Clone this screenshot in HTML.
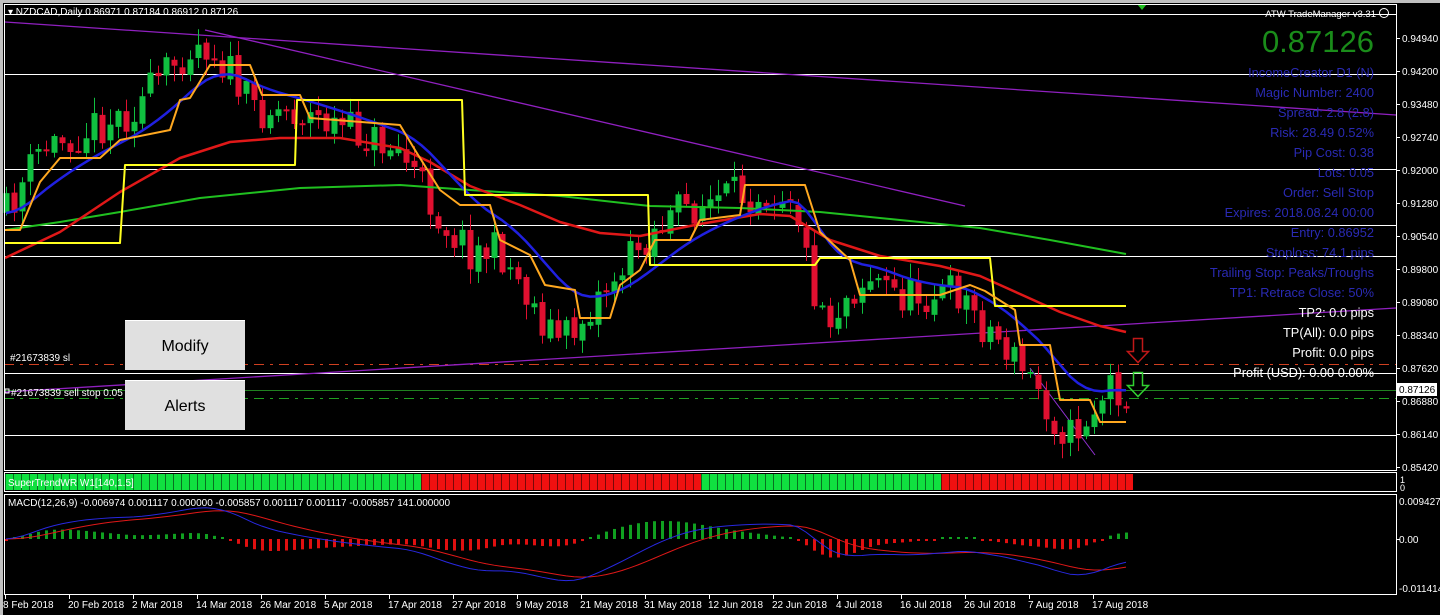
<!DOCTYPE html>
<html><head><meta charset="utf-8"><style>
html,body{margin:0;padding:0;background:#000;width:1440px;height:615px;overflow:hidden}
svg{display:block}
text{font-family:"Liberation Sans",sans-serif}
</style></head><body>
<svg id="s" width="1440" height="615" xmlns="http://www.w3.org/2000/svg">
<rect x="0" y="0" width="1440" height="615" fill="#000"/>
<rect x="0" y="0" width="1440" height="3" fill="#c0c0c0"/>
<rect x="0" y="0" width="3" height="615" fill="#c0c0c0"/>
<g id="g"></g>
<rect x="4.5" y="4.5" width="1392" height="466" fill="none" stroke="#fff"/>
<rect x="4.5" y="472.5" width="1392" height="19" fill="none" stroke="#fff"/>
<rect x="4.5" y="494.5" width="1392" height="100" fill="none" stroke="#fff"/>
<rect x="125" y="320" width="120" height="50" fill="#e0e0e0"/>
<rect x="125" y="320" width="120" height="1" fill="#fff"/>
<text x="185" y="351" font-size="16" text-anchor="middle" fill="#000">Modify</text>
<rect x="125" y="380" width="120" height="50" fill="#e0e0e0"/>
<rect x="125" y="380" width="120" height="1" fill="#fff"/>
<text x="185" y="411" font-size="16" text-anchor="middle" fill="#000">Alerts</text>
</svg>
<script>
(function(){
var g=document.getElementById('g'),h='';
function L(x1,y1,x2,y2,c,w,d){h+='<line x1="'+x1+'" y1="'+y1+'" x2="'+x2+'" y2="'+y2+'" stroke="'+c+'" stroke-width="'+(w||1)+'"'+(d?' stroke-dasharray="'+d+'"':'')+'/>';}
function P(pts,c,w){h+='<polyline fill="none" stroke="'+c+'" stroke-width="'+w+'" stroke-linejoin="round" points="'+pts.map(function(p){return p.join(',')}).join(' ')+'"/>';}
function T(x,y,s,c,sz,a){h+='<text x="'+x+'" y="'+y+'" fill="'+c+'" font-size="'+sz+'"'+(a?' text-anchor="'+a+'"':'')+'>'+s+'</text>';}
[14,74,169,225,256,373,435].forEach(function(y){L(4,y+.5,1396,y+.5,'#fff',1)});
L(4,364.5,1396,364.5,'#d04020',1,'10,6,3,6');
L(4,390.5,1396,390.5,'#208020',1);
L(4,398.5,1396,398.5,'#20a020',1,'10,6,3,6');
L(5,22,1396,115,'#9020c0',1.3);
L(205,30,965,206,'#9020c0',1.3);
L(5,392,1396,308,'#9020c0',1.3);
L(1030,368,1095,455,'#9030d0',1);
var K=[[5,215],[40,150],[80,132],[130,112],[160,80],[190,45],[205,42],[230,72],[250,108],[290,110],[320,120],[360,135],[400,150],[420,182],[440,220],[470,250],[500,252],[520,282],[540,318],[560,338],[575,330],[600,292],[620,270],[650,232],[680,210],[720,200],[760,190],[790,190],[800,222],[810,282],[830,318],[850,290],[870,276],[900,296],[930,294],[960,292],[980,322],[1000,340],[1020,368],[1040,390],[1050,415],[1070,436],[1085,420],[1100,400],[1110,384],[1126,392]];
function interp(x){for(var i=0;i<K.length-1;i++){if(x<=K[i+1][0]){var t=(x-K[i][0])/(K[i+1][0]-K[i][0]);return K[i][1]+t*(K[i+1][1]-K[i][1]);}}return K[K.length-1][1];}
var seed=11;function rnd(){seed=(seed*16807)%2147483647;return seed/2147483647;}
var N=141,prev=interp(6);
for(var i=0;i<N;i++){var x=6+8*i,c=interp(x)+(rnd()-0.5)*40;var o=prev+(rnd()-0.5)*6;var hi=Math.min(o,c)-rnd()*14-2,lo=Math.max(o,c)+rnd()*14+2;
 var col=c<o?'#10c040':'#e01030';L(x+.5,hi,x+.5,lo,col,1);var top=Math.min(o,c),bh=Math.max(2,Math.abs(c-o));h+='<rect x="'+(x-2.5)+'" y="'+top+'" width="6" height="'+bh+'" fill="'+col+'"/>';prev=c;}
function ema(a,n){var k=2/(n+1),r=[],v=a[0];for(var i=0;i<a.length;i++){v=i?a[i]*k+v*(1-k):a[0];r.push(v);}return r;}
var sm=[];for(i=0;i<N;i++)sm.push(interp(6+8*i));
var b=ema(sm,14);
P([[5,230],[60,222],[120,212],[200,198],[300,188],[400,185],[470,190],[560,196],[650,206],[740,208],[820,212],[900,220],[980,228],[1050,240],[1126,254]],'#20c020',2);
P([[5,258],[60,232],[120,192],[180,158],[230,142],[280,138],[340,138],[400,148],[430,162],[470,186],[520,205],[560,222],[600,233],[640,236],[700,224],[760,214],[790,216],[830,240],[880,256],[940,266],[980,276],[1020,294],[1060,312],[1100,326],[1126,332]],'#e01818',2.5);
P(b.map(function(v,i){return[6+8*i,Math.round(v*10)/10]}),'#2020e0',2.5);
P([[5,243],[120,243],[125,165],[295,165],[297,100],[462,100],[465,195],[648,195],[650,265],[815,265],[820,258],[990,258],[995,306],[1126,306]],'#ffff20',2);
P([[5,230],[20,230],[40,182],[60,158],[100,158],[120,140],[170,130],[180,100],[190,98],[210,65],[250,65],[262,95],[300,95],[310,118],[400,125],[415,150],[440,190],[460,205],[490,205],[500,240],[530,255],[545,285],[575,290],[580,318],[610,318],[620,285],[640,270],[655,240],[690,240],[700,220],[740,215],[745,185],[805,185],[820,232],[850,260],[860,295],[940,295],[970,285],[985,291],[1015,310],[1020,345],[1050,345],[1060,400],[1090,400],[1100,422],[1126,422]],'#ffa820',2);
h+='<path d="M1133.5,338.5h9v13h6l-10.5,11l-10.5,-11h6z" fill="none" stroke="#c01818" stroke-width="1.5"/>';
h+='<path d="M1133.5,372.5h9v13h6l-10.5,11l-10.5,-11h6z" fill="none" stroke="#30d030" stroke-width="1.5"/>';
h+='<path d="M1137,4h10l-5,6z" fill="#20c020"/>';
T(10,361,'#21673839 sl','#fff',10);
h+='<rect x="5" y="389" width="4" height="4" fill="none" stroke="#fff"/>';
T(11,396,'#21673839 sell stop 0.05','#fff',10);
T(8,15,'▾ NZDCAD,Daily  0.86971 0.87184 0.86912 0.87126','#fff',10);
T(1376,17,'ATW TradeManager v3.31','#fff',9.5,'end');
h+='<circle cx="1384" cy="13" r="4.5" fill="none" stroke="#fff"/>';
T(1374,52,'0.87126','#1a8c1a',31,'end');
var bl=['IncomeCreator D1 (N)','Magic Number: 2400','Spread: 2.8 (2.8)','Risk: 28.49 0.52%','Pip Cost: 0.38','Lots: 0.05','Order: Sell Stop','Expires: 2018.08.24 00:00','Entry: 0.86952','Stoploss: 74.1 pips','Trailing Stop: Peaks/Troughs','TP1: Retrace Close: 50%'];
bl.forEach(function(s,i){T(1374,77+20*i,s,'#2a2ab4',12.8,'end')});
['TP2: 0.0 pips','TP(All): 0.0 pips','Profit: 0.0 pips','Profit (USD): 0.00 0.00%'].forEach(function(s,i){T(1374,317+20*i,s,'#fff',12.8,'end')});
var pl=['0.94940','0.94200','0.93480','0.92740','0.92000','0.91280','0.90540','0.89800','0.89080','0.88340','0.87620','0.86880','0.86140','0.85420'];
pl.forEach(function(s,i){var y=38+33*i;L(1396,y+.5,1400,y+.5,'#fff');T(1402,y+4,s,'#fff',10)});
h+='<rect x="1397" y="383" width="40" height="13" fill="#fff"/>';T(1399,393,'0.87126','#000',10);
for(i=0;i<N;i++){var x=5+8*i;var col=(x<417||(x>=697&&x<937))?'#10e040':'#f01010';h+='<rect x="'+x+'" y="474" width="8" height="16" fill="'+col+'"/><line x1="'+(x+.5)+'" y1="474" x2="'+(x+.5)+'" y2="490" stroke="#000" stroke-opacity="0.5"/>';}
T(8,486,'SuperTrendWR W1[140,1.5]','#fff',10);
T(1400,483,'1','#fff',9);T(1400,491,'0','#fff',9);
var e12=ema(sm,12),e26=ema(sm,26),m=[];for(i=0;i<N;i++)m.push(-(e12[i]-e26[i]));var sg=ema(m,9);
var ml=[],sl=[];for(i=0;i<N;i++){var x=6+8*i;ml.push([x,539-m[i]*0.9]);sl.push([x,539-sg[i]*0.9]);var hv=(m[i]-sg[i])*1.2;var col=hv>0?'#10a020':'#e01010';var hh=Math.max(2,Math.abs(hv));h+='<rect x="'+(x-1)+'" y="'+(hv>0?539-hh:539)+'" width="3" height="'+hh+'" fill="'+col+'"/>';}
P(sl,'#e01818',1);P(ml,'#2828e0',1);
T(8,506,'MACD(12,26,9) -0.006974 0.001117 0.000000 -0.005857 0.001117 0.001117 -0.005857 141.000000','#fff',10);
T(1399,505,'0.009427','#fff',10);L(1396,539.5,1400,539.5,'#fff');T(1399,543,'0.00','#fff',10);T(1399,592,'-0.011414','#fff',10);
var d=['8 Feb 2018','20 Feb 2018','2 Mar 2018','14 Mar 2018','26 Mar 2018','5 Apr 2018','17 Apr 2018','27 Apr 2018','9 May 2018','21 May 2018','31 May 2018','12 Jun 2018','22 Jun 2018','4 Jul 2018','16 Jul 2018','26 Jul 2018','7 Aug 2018','17 Aug 2018'];
d.forEach(function(s,i){var x=5+64*i;L(x+.5,595,x+.5,599,'#fff');T(i?x-1:3,608,s,'#fff',10)});
g.innerHTML=h;
})();
</script>
</body></html>
